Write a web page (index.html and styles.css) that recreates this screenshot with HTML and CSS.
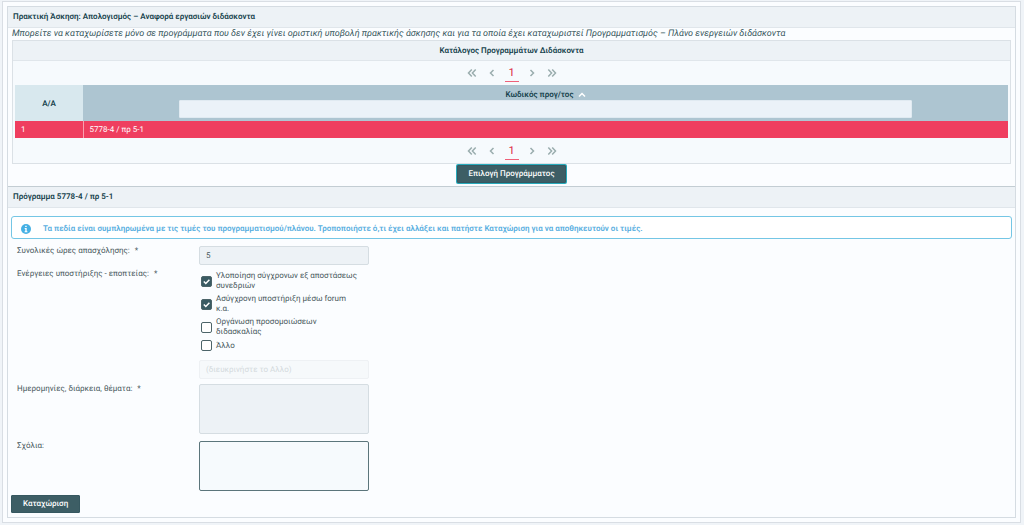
FILE: index.html
```html
<!DOCTYPE html>
<html lang="el">
<head>
<meta charset="utf-8">
<title>Πρακτική Άσκηση</title>
<link rel="stylesheet" href="styles.css">
</head>
<body>
<svg class="defs" aria-hidden="true">
  <symbol id="single" viewBox="0 0 10 10"><path d="M6.500 2 3.500 5l3 3"/></symbol>
  <symbol id="double" viewBox="0 0 10 10"><path d="M4.800 1.500 1.500 5l3.300 3.500M8.700 1.500 5.400 5l3.300 3.500"/></symbol>
</svg>
<main class="page">
  <section class="panel">
    <h1 class="panel-title">Πρακτική Άσκηση: Απολογισμός – Αναφορά εργασιών διδάσκοντα</h1>
    <div class="catalog-body">
      <p class="hint">Μπορείτε να καταχωρίσετε μόνο σε προγράμματα που δεν έχει γίνει οριστική υποβολή πρακτικής άσκησης και για τα οποία έχει καταχωριστεί Προγραμματισμός – Πλάνο ενεργειών διδάσκοντα</p>
      <div class="datatable">
        <h2 class="datatable-title">Κατάλογος Προγραμμάτων Διδάσκοντα</h2>
        <nav class="pager" aria-label="Σελίδες, επάνω">
          <button type="button" class="pager-btn" aria-label="Πρώτη"><svg class="arrow"><use href="#double"/></svg></button>
          <button type="button" class="pager-btn" aria-label="Προηγούμενη"><svg class="arrow"><use href="#single"/></svg></button>
          <button type="button" class="pager-btn current">1</button>
          <button type="button" class="pager-btn" aria-label="Επόμενη"><svg class="arrow flip"><use href="#single"/></svg></button>
          <button type="button" class="pager-btn" aria-label="Τελευταία"><svg class="arrow flip"><use href="#double"/></svg></button>
        </nav>
        <table class="programs">
          <thead>
            <tr>
              <th class="col-index" scope="col">Α/Α</th>
              <th class="col-code" scope="col">
                <div class="sort-label">Κωδικός προγ/τος <svg class="sort" viewBox="0 0 8 8"><path d="M1 5.500 4 2.500l3 3"/></svg></div>
                <input class="filter" type="text" aria-label="Κωδικός προγ/τος">
              </th>
            </tr>
          </thead>
          <tbody>
            <tr class="selected"><td>1</td><td>5778-4 / πρ 5-1</td></tr>
          </tbody>
        </table>
        <nav class="pager" aria-label="Σελίδες, κάτω">
          <button type="button" class="pager-btn" aria-label="Πρώτη"><svg class="arrow"><use href="#double"/></svg></button>
          <button type="button" class="pager-btn" aria-label="Προηγούμενη"><svg class="arrow"><use href="#single"/></svg></button>
          <button type="button" class="pager-btn current">1</button>
          <button type="button" class="pager-btn" aria-label="Επόμενη"><svg class="arrow flip"><use href="#single"/></svg></button>
          <button type="button" class="pager-btn" aria-label="Τελευταία"><svg class="arrow flip"><use href="#double"/></svg></button>
        </nav>
      </div>
      <button type="button" class="btn btn-select">Επιλογή Προγράμματος</button>
    </div>
    <h2 class="panel-title second">Πρόγραμμα 5778-4 / πρ 5-1</h2>
    <form class="program-form">
      <div class="message">
        <svg class="info" viewBox="0 0 10 10"><circle cx="5" cy="5" r="5"/><path d="M4.200 1.800h1.500v1.300H4.200zM3.700 4.100h2v3.100h.7v1H3.600v-1h.7V5.100h-.6z"/></svg>
        <span>Τα πεδία είναι συμπληρωμένα με τις τιμές του προγραμματισμού/πλάνου. Τροποποιήστε ό,τι έχει αλλάξει και πατήστε Καταχώριση για να αποθηκευτούν οι τιμές.</span>
      </div>
      <div class="fields">
        <label class="label" for="hours">Συνολικές ώρες απασχόλησης: <span class="star">*</span></label>
        <input class="field" id="hours" type="text" value="5">

        <span class="label tall" id="support">Ενέργειες υποστήριξης - εποπτείας: <span class="star">*</span></span>
        <div class="choices" role="group" aria-labelledby="support">
          <label class="choice"><input type="checkbox" class="check" checked><span>Υλοποίηση σύγχρονων εξ αποστάσεως συνεδριών</span></label>
          <label class="choice"><input type="checkbox" class="check" checked><span>Ασύγχρονη υποστήριξη μέσω forum<br>κ.α.</span></label>
          <label class="choice"><input type="checkbox" class="check"><span>Οργάνωση προσομοιώσεων<br>διδασκαλίας</span></label>
          <label class="choice"><input type="checkbox" class="check"><span>Άλλο</span></label>
          <input class="field other" type="text" placeholder="(διευκρινήστε το Αλλο)" aria-label="Άλλο" disabled>
        </div>

        <label class="label" for="dates">Ημερομηνίες, διάρκεια, θέματα: <span class="star">*</span></label>
        <textarea class="field area" id="dates"></textarea>

        <label class="label" for="notes">Σχόλια:</label>
        <textarea class="field area active" id="notes"></textarea>
      </div>
      <button type="button" class="btn">Καταχώριση</button>
    </form>
  </section>
</main>
</body>
</html>
```
FILE: styles.css
```css
* { box-sizing: border-box; }
body {
  margin: 0;
  background: #f0f4f8;
  color: #48585c;
  font: 8px/10px Roboto, "Noto Sans", sans-serif;
  text-rendering: geometricPrecision;
}
h1, h2, p { margin: 0; }
button, input, textarea { font: inherit; color: inherit; margin: 0; text-rendering: inherit; }
.defs { display: none; }

.page {
  margin: 1px 3px 2px 2px;
  padding: 4px;
  border: 1px solid #d9dee4;
  background: #fbfdff;
}
.panel { border: 1px solid #d5dce2; }
.panel-title, .datatable-title {
  background: #edf2f6;
  border-bottom: 1px solid #e0e6eb;
  color: #14414b;
  font-size: 8px;
  font-weight: 600;
  line-height: 20px;
}
.panel-title { padding: 0 5px; }
.panel-title.second { border-top: 1px solid #c3cdd3; }

.catalog-body { padding: 0 4px 3px; }
.hint { color: #36565c; font-size: 9px; font-style: italic; line-height: 12px; }
.datatable { border: 1px solid #dbe1e6; background: #f6fafd; }
.datatable-title { text-align: center; line-height: 19px; }

.pager { display: flex; justify-content: center; align-items: center; gap: 6px; height: 24px; }
.pager-btn {
  display: flex;
  align-items: center;
  justify-content: center;
  width: 14px;
  height: 17px;
  padding: 0;
  border: 0;
  border-bottom: 1px solid transparent;
  background: none;
}
.pager-btn.current { border-bottom-color: #ef6079; color: #dc1f3e; font-size: 11px; }
.arrow { width: 10px; height: 10px; fill: none; stroke: #9aadae; stroke-width: 1.500; }
.flip { transform: scaleX(-1); }

.programs { width: calc(100% - 4px); margin: 0 2px 1px; border-collapse: collapse; table-layout: fixed; }
.programs th { height: 36px; padding: 4px 4px 3px; color: #14414b; font-weight: 600; background: #adc5d1; }
.programs .col-index { width: 68px; background: #d8e8ee; }
.programs td { height: 17px; padding: 0 6px; background: #ef3e5f; color: #fff; }
.programs td + td { border-left: 1px solid #f8a0b0; }
.sort-label { display: flex; align-items: center; justify-content: center; gap: 4px; height: 10px; }
.sort { width: 8px; height: 8px; fill: none; stroke: #fff; stroke-width: 1.500; }
.filter {
  display: block;
  width: 80%;
  height: 18px;
  margin: 0 auto;
  border: 1px solid #e0eaf1;
  border-radius: 1px;
  background: #ebf2f8;
}

.btn {
  display: block;
  height: 18px;
  padding: 0 11px;
  border: 1px solid #365860;
  border-radius: 1px;
  background: #3d5e65;
  color: #fff;
  font-weight: 500;
  line-height: 16px;
}
.btn-select { margin: 1px auto 0; padding: 0 10px; box-shadow: 0 0 0 1px #27aabb; }

.program-form { padding: 8px 3px 4px; }
.message {
  display: flex;
  align-items: center;
  gap: 12px;
  height: 23px;
  padding: 2px 9px 0;
  border: 1px solid #74c6e5;
  border-radius: 3px;
  background: #fff;
  color: #57aee0;
  font-weight: 600;
}
.info { width: 10px; height: 10px; fill: #45b0e4; flex: none; }
.info path { fill: #fff; }

.fields {
  display: grid;
  grid-template-columns: 182px 170px;
  padding: 7px 6px 4px;
}
.label { white-space: nowrap; }
.label.tall { padding-top: 4px; }
.star { margin-left: 3px; }
.field {
  display: block;
  width: 100%;
  height: 19px;
  padding: 0 6px;
  border: 1px solid #d5dde2;
  border-radius: 2px;
  background: #edf2f6;
}
.choices { padding: 6px 0 5px; }
.choice { display: flex; align-items: center; gap: 4px; margin: 0 0 3px 2px; }
.check {
  appearance: none;
  flex: none;
  width: 11px;
  height: 11px;
  border: 1px solid #4c6469;
  border-radius: 2px;
  background: #fff;
}
.check:checked {
  background: #3a5b63 url("data:image/svg+xml,%3Csvg xmlns='http://www.w3.org/2000/svg' viewBox='0 0 9 9'%3E%3Cpath d='M1.800 4.500 3.800 6.500 7.400 2.700' fill='none' stroke='white' stroke-width='1.500'/%3E%3C/svg%3E") center / 9px 9px no-repeat;
}
.other { margin-top: 9px; background: #f6f9fb; border-color: #eef1f4; }
.other::placeholder { color: #d4dadd; opacity: 1; }
.area { height: 50px; margin-bottom: 7px; resize: none; }
.area.active { margin-bottom: 0; border-color: #5b757b; background: #f6fafd; }
```
